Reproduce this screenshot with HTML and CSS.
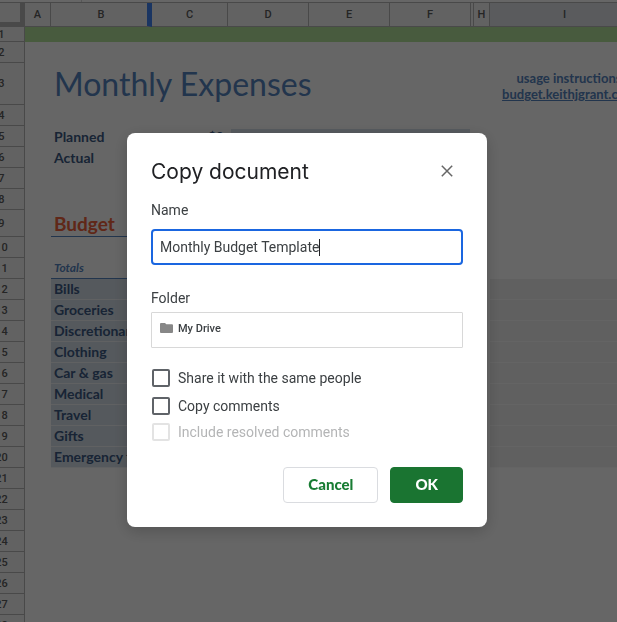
FILE: index.html
```html
<!DOCTYPE html>
<html lang="en">
<head>
<meta charset="utf-8">
<title>Monthly Budget Template</title>
<link rel="stylesheet" href="styles.css">
</head>
<body>
<main class="sheet">
  <div class="formula-bar"><span class="name-box"></span></div>
  <table class="grid">
    <colgroup>
      <col class="w-head"><col class="w-a"><col class="w-b"><col class="w-c"><col class="w-wide"><col class="w-wide"><col class="w-wide"><col class="w-g"><col class="w-h"><col class="w-i">
    </colgroup>
    <thead>
      <tr>
        <th class="corner"></th><th>A</th><th class="resizing">B</th><th>C</th><th>D</th><th>E</th><th>F</th><th></th><th>H</th><th class="selected">I</th>
      </tr>
    </thead>
    <tbody>
      <tr class="banner"><th>1</th><td colspan="9"></td></tr>
      <tr><th>2</th><td colspan="9"></td></tr>
      <tr class="title-row"><th>3</th><td></td><td colspan="6"><h1 class="sheet-title">Monthly Expenses</h1></td><td colspan="2" class="usage">usage instructions<br><a href="#">budget.keithjgrant.com</a></td></tr>
      <tr><th>4</th><td colspan="9"></td></tr>
      <tr><th>5</th><td></td><td class="label">Planned</td><td class="amount">$0</td><td colspan="3"><div class="bar"></div></td><td colspan="3"></td></tr>
      <tr><th>6</th><td></td><td class="label">Actual</td><td colspan="7"></td></tr>
      <tr><th>7</th><td colspan="9"></td></tr>
      <tr><th>8</th><td colspan="9"></td></tr>
      <tr class="section-row"><th>9</th><td></td><td class="section ruled" colspan="5">Budget</td><td colspan="3"></td></tr>
      <tr><th>10</th><td colspan="9"></td></tr>
      <tr><th>11</th><td></td><td class="totals ruled" colspan="5">Totals</td><td colspan="3"></td></tr>
      <tr><th>12</th><td></td><td class="label tint" colspan="5">Bills</td><td colspan="2"></td><td class="shade"></td></tr>
      <tr><th>13</th><td></td><td class="label tint" colspan="5">Groceries</td><td colspan="2"></td><td class="shade"></td></tr>
      <tr><th>14</th><td></td><td class="label tint" colspan="5">Discretionary</td><td colspan="2"></td><td class="shade"></td></tr>
      <tr><th>15</th><td></td><td class="label tint" colspan="5">Clothing</td><td colspan="2"></td><td class="shade"></td></tr>
      <tr><th>16</th><td></td><td class="label tint" colspan="5">Car &amp; gas</td><td colspan="2"></td><td class="shade"></td></tr>
      <tr><th>17</th><td></td><td class="label tint" colspan="5">Medical</td><td colspan="2"></td><td class="shade"></td></tr>
      <tr><th>18</th><td></td><td class="label tint" colspan="5">Travel</td><td colspan="2"></td><td class="shade"></td></tr>
      <tr><th>19</th><td></td><td class="label tint" colspan="5">Gifts</td><td colspan="2"></td><td class="shade"></td></tr>
      <tr><th>20</th><td></td><td class="label tint" colspan="5">Emergency fund</td><td colspan="2"></td><td class="shade"></td></tr>
      <tr><th>21</th><td colspan="9"></td></tr>
      <tr><th>22</th><td colspan="9"></td></tr>
      <tr><th>23</th><td colspan="9"></td></tr>
      <tr><th>24</th><td colspan="9"></td></tr>
      <tr><th>25</th><td colspan="9"></td></tr>
      <tr><th>26</th><td colspan="9"></td></tr>
      <tr><th>27</th><td colspan="9"></td></tr>
      <tr><th>28</th><td colspan="9"></td></tr>
    </tbody>
  </table>
</main>

<div class="overlay">
  <form class="dialog" role="dialog" aria-labelledby="dialog-title">
    <header class="dialog-header">
      <h2 id="dialog-title">Copy document</h2>
      <button class="close" type="button" aria-label="Close">
        <svg viewBox="0 0 12 12" width="12" height="12"><path d="M.8.8l10.4 10.4M11.2.8L.8 11.2" fill="none" stroke="#666" stroke-width="1.5"/></svg>
      </button>
    </header>

    <label class="field-label" for="name">Name</label>
    <div class="text-field">
      <input id="name" type="text" value="Monthly Budget Template"><span class="caret"></span>
    </div>

    <label class="field-label folder-label" for="folder">Folder</label>
    <button class="folder" id="folder" type="button">
      <svg viewBox="0 0 13 10" width="13" height="10"><path d="M1 0h4l1.3 1.3H12a1 1 0 0 1 1 1V9a1 1 0 0 1-1 1H1a1 1 0 0 1-1-1V1a1 1 0 0 1 1-1z" fill="#878787"/></svg>
      My Drive
    </button>

    <div class="options">
      <label class="option"><input type="checkbox">Share it with the same people</label>
      <label class="option"><input type="checkbox">Copy comments</label>
      <label class="option disabled"><input type="checkbox" disabled>Include resolved comments</label>
    </div>

    <footer class="actions">
      <button class="button" type="button">Cancel</button>
      <button class="button primary" type="submit">OK</button>
    </footer>
  </form>
</div>
</body>
</html>
```
FILE: styles.css
```css
* { box-sizing: border-box; }

body {
  margin: 0;
  height: 100vh;
  overflow: hidden;
  background: #fff;
  font-family: Roboto, "Liberation Sans", sans-serif;
  color: #3c4043;
}

button, input { font: inherit; color: inherit; }

/* Spreadsheet */
.sheet { height: 100vh; overflow: hidden; }

.formula-bar {
  height: 3px;
  border-bottom: 1px solid #b7b7b7;
}

.name-box {
  display: block;
  width: 82px;
  height: 2px;
  border-right: 1px solid #dadada;
}

/* scrolled slightly to the right, so the row headers are clipped */
.grid {
  width: 661px;
  margin-left: -21px;
  table-layout: fixed;
  border-collapse: separate;
  border-spacing: 0;
}

.w-head { width: 46px; }
.w-a { width: 26px; }
.w-b { width: 101px; }
.w-c { width: 76px; }
.w-wide { width: 81px; }
.w-g { width: 3px; }
.w-h { width: 16px; }
.w-i { width: 150px; }

.grid tr { height: 21px; }
.grid thead tr { height: 24px; }
.grid .banner { height: 15px; }
.grid .title-row { height: 42px; }
.grid .section-row { height: 27px; }

.grid th, .grid td {
  padding: 0;
  line-height: 1;
  white-space: nowrap;
}

.grid th {
  border-right: 1px solid #b7b7b7;
  border-bottom: 1px solid #b7b7b7;
  background: #f6f6f6;
  color: #5c5c5c;
  font-size: 11px;
  font-weight: 500;
  text-align: center;
}

.grid .corner { border-right: 5px solid #b7b7b7; border-bottom-width: 5px; }
.grid .resizing { border-right: 5px solid #4285f4; padding-left: 4px; }
.grid .selected { background: #e1e4e9; }
.banner td { background: #b5e39c; }

.grid td {
  font-family: Lato, sans-serif;
  font-size: 14px;
  color: #3c5a85;
}

.sheet-title {
  margin: 0;
  padding-left: 3px;
  font-size: 32px;
  font-weight: 400;
  line-height: 40px;
  color: #5584c0;
}

.grid .usage {
  padding: 4px 0 0 24px;
  font-size: 13px;
  line-height: 16px;
  text-align: center;
  font-weight: 700;
  color: #5584c0;
}

.usage a { color: inherit; }
.grid .label { padding-left: 3px; font-weight: 700; }
.grid .amount { padding-right: 4px; font-weight: 700; text-align: right; }

.bar {
  height: 18px;
  margin: 2px 1px 0 3px;
  background: #d9e2ec;
}

.grid .ruled { border-bottom: 1px solid #5584c0; padding-left: 3px; }
.grid .section { font-size: 19px; font-weight: 700; color: #f0623c; }
.grid .totals { font-size: 12px; font-style: italic; font-weight: 700; color: #5584c0; }
.grid .tint { background: #d5dfe8; border-bottom: 1px solid #f0f3f6; }
.grid .shade { background: #efefef; border-bottom: 1px solid #fafafa; }

/* Dialog */
.overlay {
  position: fixed;
  inset: 0;
  display: flex;
  align-items: flex-start;
  justify-content: center;
  padding: 133px 3px 0 0;
  background: rgba(0, 0, 0, .6);
}

.dialog {
  display: flex;
  flex-direction: column;
  width: 360px;
  max-width: 100%;
  padding: 24px;
  border-radius: 8px;
  background: #fff;
  box-shadow: 0 4px 16px rgba(0, 0, 0, .2);
}

.dialog-header {
  display: flex;
  align-items: center;
  justify-content: space-between;
  height: 28px;
}

.dialog-header h2 {
  margin: 0;
  font-family: Inter, sans-serif;
  font-size: 21px;
  font-weight: 400;
  color: #202124;
}

.close {
  display: grid;
  place-items: center;
  width: 32px;
  height: 24px;
  padding: 0;
  border: 0;
  background: none;
}

.field-label {
  margin-top: 15px;
  font-size: 14px;
  line-height: 20px;
}

.folder-label { margin-top: 23px; }

.text-field {
  display: flex;
  align-items: center;
  height: 36px;
  margin-top: 9px;
  padding: 0 7px;
  border: 2px solid #1a66e0;
  border-radius: 4px;
}

.text-field input {
  field-sizing: content;
  padding: 0;
  border: 0;
  outline: 0;
  font-size: 14px;
}

.caret { width: 1px; height: 17px; background: #202124; }

.folder {
  display: flex;
  align-items: center;
  gap: 5px;
  height: 36px;
  margin-top: 4px;
  padding: 0 8px 4px;
  border: 1px solid #d8d8d8;
  border-radius: 1px;
  background: #fff;
  font-size: 11px;
  font-weight: 500;
}

.options { margin-top: 16px; }

.option {
  display: flex;
  align-items: center;
  gap: 8px;
  height: 28px;
  padding-left: 1px;
  font-size: 14px;
}

.option input {
  appearance: none;
  width: 18px;
  height: 18px;
  margin: 0;
  border: 2px solid #5f6368;
  border-radius: 2px;
}

.option.disabled { height: 24px; color: #b4b5b6; }
.option.disabled input { border-color: #e3e3e3; }

.actions {
  display: flex;
  justify-content: flex-end;
  gap: 12px;
  margin-top: 23px;
}

.button {
  height: 36px;
  padding: 0 24px 2px;
  border: 1px solid #dadce0;
  border-radius: 4px;
  background: #fff;
  font-family: Lato, sans-serif;
  font-size: 15px;
  font-weight: 900;
  color: #187c33;
}

.button.primary {
  border-color: #1a7431;
  background: #1a7431;
  color: #fff;
}
```
